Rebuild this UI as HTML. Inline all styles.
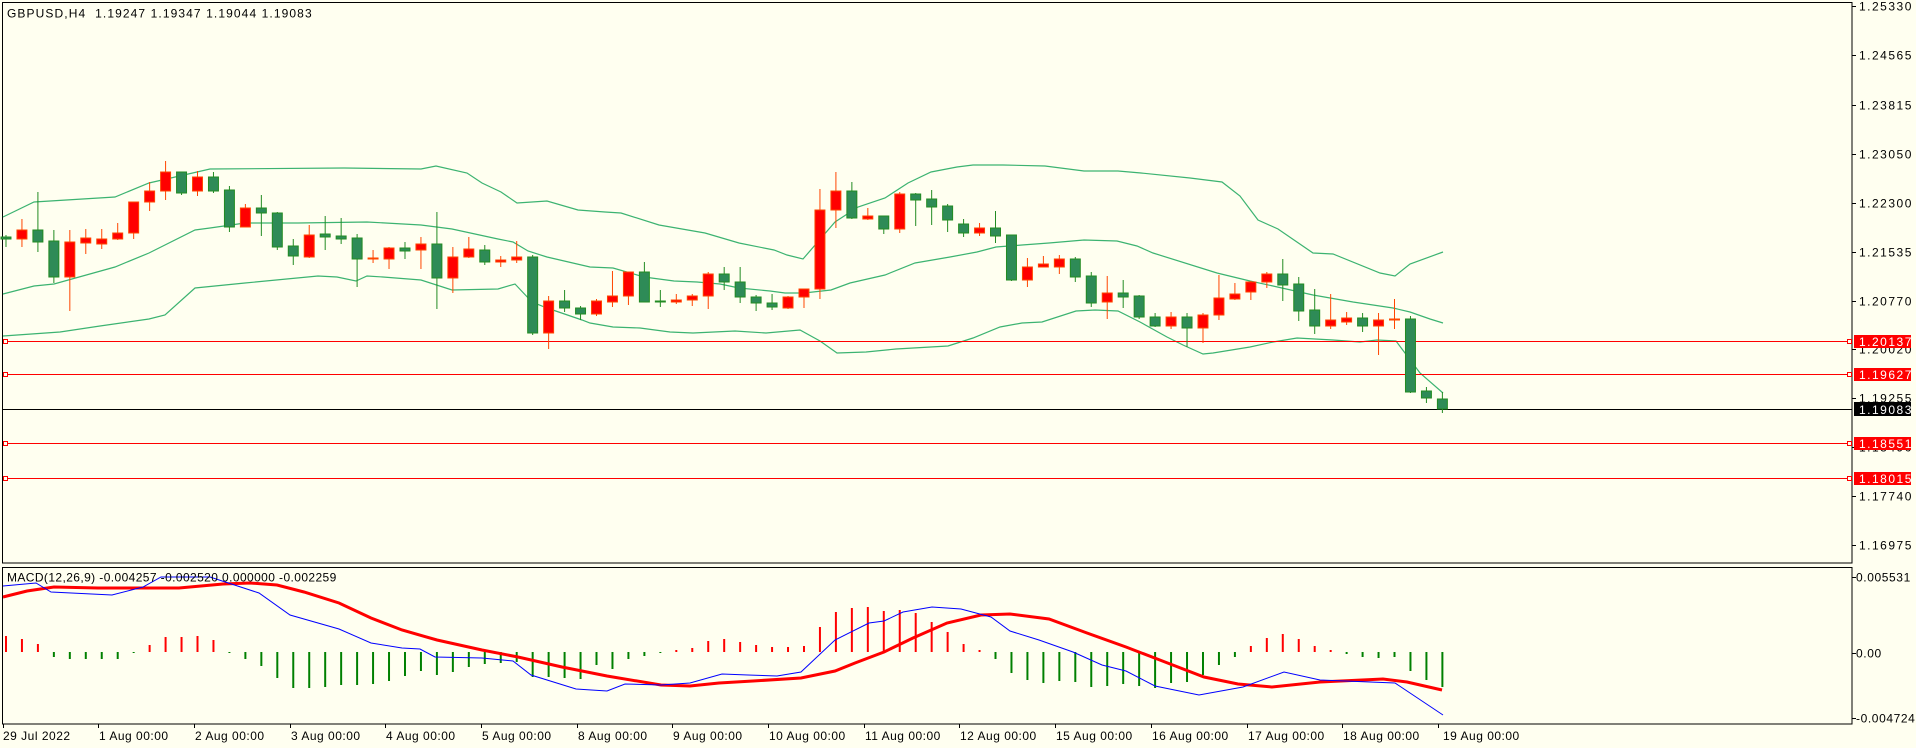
<!DOCTYPE html>
<html><head><meta charset="utf-8"><style>
html,body{margin:0;padding:0;background:#FFFFF0;}
svg{display:block;font-family:"Liberation Sans",sans-serif;}
.rw{stroke:#FF4500;stroke-width:1}
.rb{fill:#FF0000;stroke:#FF4500;stroke-width:1}
.gw{stroke:#228B22;stroke-width:1}
.gb{fill:#2E8B57;stroke:#228B22;stroke-width:1}
.hr{stroke:#FF0000;stroke-width:2}
.hg{stroke:#008000;stroke-width:2}
.ax{font-size:12px;letter-spacing:1.5px;fill:#000}
.tl{font-size:12px;letter-spacing:0.5px;fill:#000}
</style></head><body>
<svg width="1916" height="748" viewBox="0 0 1916 748" xmlns="http://www.w3.org/2000/svg">
<rect width="1916" height="748" fill="#FFFFF0"/>
<rect x="2.5" y="2.5" width="1849.5" height="560.5" fill="none" stroke="#000" stroke-width="1"/>
<rect x="2.5" y="567.5" width="1849.5" height="156.5" fill="none" stroke="#000" stroke-width="1"/>

<g fill="none" stroke="#3CB371" stroke-width="1.2">
<polyline points="3,217 34,202 115,197 149,183 210,169 344,168 421,169 436,166 467,173 482,183 501,192 517,203 547,201 578,210 605,212 621,213 659,225 705,233 739,243 774,250 787,255 803,259 835,222 858,207 885,198 908,183 931,172 957,167 973,165 1003,165 1045,166 1084,171 1118,171 1141,173 1190,178 1222,182 1240,196 1258,220 1278,229 1313,253 1333,254 1380,273 1395,276 1410,264 1443,252"/>
<polyline points="3,294 34,286 54,284 115,267 149,253 195,230 210,228 245,223 298,223 367,222 421,225 452,229 498,239 513,242 528,251 547,257 590,267 613,268 644,277 674,281 697,282 720,284 739,288 770,291 785,293 804,293 831,290 850,283 885,275 915,263 950,257 977,252 996,247 1022,245 1049,243 1084,240 1117,241 1137,246 1153,253 1217,273 1250,281 1273,286 1313,295 1353,302 1393,308 1410,312 1430,319 1443,323"/>
<polyline points="3,336 60,332 100,326 149,319 165,315 195,288 245,283 318,276 337,277 356,281 367,276 383,277 421,280 452,290 498,289 515,284 532,302 547,308 582,320 590,323 613,327 640,328 670,332 693,333 735,331 766,333 800,330 820,341 837,353 866,352 896,349 948,346 973,338 1000,327 1022,323 1042,322 1076,311 1095,310 1118,311 1140,322 1167,337 1183,345 1203,354 1213,353 1250,347 1273,342 1297,338 1333,340 1360,342 1377,340 1396,341 1420,373 1443,393"/>
</g>

<line x1="3" y1="341.5" x2="1852" y2="341.5" stroke="#FF0000" stroke-width="1"/>
<line x1="3" y1="374.5" x2="1852" y2="374.5" stroke="#FF0000" stroke-width="1"/>
<line x1="3" y1="409.5" x2="1852" y2="409.5" stroke="#000" stroke-width="1"/>
<line x1="3" y1="443.5" x2="1852" y2="443.5" stroke="#FF0000" stroke-width="1"/>
<line x1="3" y1="478.5" x2="1852" y2="478.5" stroke="#FF0000" stroke-width="1"/>
<g fill="#FFFFF0" stroke="#FF0000" stroke-width="1">
<rect x="3.5" y="339.5" width="4" height="4"/><rect x="1847.5" y="339.5" width="4" height="4"/>
<rect x="3.5" y="372.5" width="4" height="4"/><rect x="1847.5" y="372.5" width="4" height="4"/>
<rect x="3.5" y="441.5" width="4" height="4"/><rect x="1847.5" y="441.5" width="4" height="4"/>
<rect x="3.5" y="476.5" width="4" height="4"/><rect x="1847.5" y="476.5" width="4" height="4"/>
</g>

<g transform="scale(0.9975 1)">
<line class="gw" x1="6" y1="235" x2="6" y2="247"/><rect class="gb" x="1" y="237" width="10" height="2"/>
<line class="rw" x1="22" y1="219" x2="22" y2="247"/><rect class="rb" x="17" y="230" width="10" height="9"/>
<line class="gw" x1="38" y1="192" x2="38" y2="252"/><rect class="gb" x="33" y="230" width="10" height="12"/>
<line class="gw" x1="54" y1="230" x2="54" y2="283"/><rect class="gb" x="49" y="241" width="10" height="36"/>
<line class="rw" x1="70" y1="230" x2="70" y2="311"/><rect class="rb" x="65" y="242" width="10" height="35"/>
<line class="rw" x1="86" y1="229" x2="86" y2="254"/><rect class="rb" x="81" y="238" width="10" height="5"/>
<line class="rw" x1="102" y1="229" x2="102" y2="249"/><rect class="rb" x="97" y="239" width="10" height="5"/>
<line class="rw" x1="118" y1="223" x2="118" y2="240"/><rect class="rb" x="113" y="233" width="10" height="6"/>
<line class="rw" x1="134" y1="202" x2="134" y2="239"/><rect class="rb" x="129" y="202" width="10" height="31"/>
<line class="rw" x1="150" y1="182" x2="150" y2="211"/><rect class="rb" x="145" y="191" width="10" height="11"/>
<line class="rw" x1="166" y1="161" x2="166" y2="200"/><rect class="rb" x="161" y="172" width="10" height="19"/>
<line class="gw" x1="182" y1="172" x2="182" y2="195"/><rect class="gb" x="177" y="172" width="10" height="21"/>
<line class="rw" x1="198" y1="171" x2="198" y2="196"/><rect class="rb" x="193" y="177" width="10" height="14"/>
<line class="gw" x1="214" y1="172" x2="214" y2="193"/><rect class="gb" x="209" y="177" width="10" height="14"/>
<line class="gw" x1="230" y1="186" x2="230" y2="232"/><rect class="gb" x="225" y="190" width="10" height="37"/>
<line class="rw" x1="246" y1="204" x2="246" y2="227"/><rect class="rb" x="241" y="208" width="10" height="19"/>
<line class="gw" x1="262" y1="195" x2="262" y2="236"/><rect class="gb" x="257" y="208" width="10" height="5"/>
<line class="gw" x1="278" y1="212" x2="278" y2="250"/><rect class="gb" x="273" y="213" width="10" height="34"/>
<line class="gw" x1="294" y1="239" x2="294" y2="265"/><rect class="gb" x="289" y="246" width="10" height="10"/>
<line class="rw" x1="310" y1="225" x2="310" y2="258"/><rect class="rb" x="305" y="235" width="10" height="22"/>
<line class="gw" x1="326" y1="216" x2="326" y2="250"/><rect class="gb" x="321" y="234" width="10" height="3"/>
<line class="gw" x1="342" y1="218" x2="342" y2="244"/><rect class="gb" x="337" y="236" width="10" height="3"/>
<line class="gw" x1="358" y1="234" x2="358" y2="287"/><rect class="gb" x="353" y="238" width="10" height="21"/>
<line class="rw" x1="374" y1="250" x2="374" y2="263"/><rect class="rb" x="369" y="258" width="10" height="1"/>
<line class="rw" x1="390" y1="247" x2="390" y2="269"/><rect class="rb" x="385" y="248" width="10" height="11"/>
<line class="gw" x1="406" y1="242" x2="406" y2="259"/><rect class="gb" x="401" y="248" width="10" height="3"/>
<line class="rw" x1="422" y1="237" x2="422" y2="269"/><rect class="rb" x="417" y="244" width="10" height="6"/>
<line class="gw" x1="438" y1="212" x2="438" y2="309"/><rect class="gb" x="433" y="244" width="10" height="34"/>
<line class="rw" x1="454" y1="247" x2="454" y2="293"/><rect class="rb" x="449" y="257" width="10" height="21"/>
<line class="rw" x1="470" y1="237" x2="470" y2="258"/><rect class="rb" x="465" y="249" width="10" height="8"/>
<line class="gw" x1="486" y1="245" x2="486" y2="265"/><rect class="gb" x="481" y="250" width="10" height="12"/>
<line class="rw" x1="502" y1="256" x2="502" y2="267"/><rect class="rb" x="497" y="260" width="10" height="2"/>
<line class="rw" x1="518" y1="241" x2="518" y2="263"/><rect class="rb" x="513" y="257" width="10" height="3"/>
<line class="gw" x1="534" y1="255" x2="534" y2="335"/><rect class="gb" x="529" y="257" width="10" height="76"/>
<line class="rw" x1="550" y1="296" x2="550" y2="349"/><rect class="rb" x="545" y="301" width="10" height="32"/>
<line class="gw" x1="566" y1="290" x2="566" y2="312"/><rect class="gb" x="561" y="301" width="10" height="7"/>
<line class="gw" x1="582" y1="306" x2="582" y2="320"/><rect class="gb" x="577" y="308" width="10" height="6"/>
<line class="rw" x1="598" y1="299" x2="598" y2="316"/><rect class="rb" x="593" y="301" width="10" height="13"/>
<line class="rw" x1="614" y1="271" x2="614" y2="307"/><rect class="rb" x="609" y="296" width="10" height="6"/>
<line class="rw" x1="630" y1="272" x2="630" y2="305"/><rect class="rb" x="625" y="272" width="10" height="24"/>
<line class="gw" x1="646" y1="262" x2="646" y2="302"/><rect class="gb" x="641" y="272" width="10" height="30"/>
<line class="gw" x1="662" y1="290" x2="662" y2="307"/><rect class="gb" x="657" y="301" width="10" height="1"/>
<line class="rw" x1="678" y1="294" x2="678" y2="304"/><rect class="rb" x="673" y="300" width="10" height="2"/>
<line class="rw" x1="694" y1="294" x2="694" y2="306"/><rect class="rb" x="689" y="296" width="10" height="4"/>
<line class="rw" x1="710" y1="272" x2="710" y2="309"/><rect class="rb" x="705" y="274" width="10" height="22"/>
<line class="gw" x1="726" y1="267" x2="726" y2="290"/><rect class="gb" x="721" y="274" width="10" height="8"/>
<line class="gw" x1="742" y1="267" x2="742" y2="303"/><rect class="gb" x="737" y="282" width="10" height="15"/>
<line class="gw" x1="758" y1="295" x2="758" y2="311"/><rect class="gb" x="753" y="297" width="10" height="6"/>
<line class="gw" x1="774" y1="294" x2="774" y2="310"/><rect class="gb" x="769" y="303" width="10" height="4"/>
<line class="rw" x1="790" y1="296" x2="790" y2="309"/><rect class="rb" x="785" y="297" width="10" height="11"/>
<line class="rw" x1="806" y1="289" x2="806" y2="308"/><rect class="rb" x="801" y="289" width="10" height="8"/>
<line class="rw" x1="822" y1="189" x2="822" y2="299"/><rect class="rb" x="817" y="210" width="10" height="79"/>
<line class="rw" x1="838" y1="172" x2="838" y2="228"/><rect class="rb" x="833" y="191" width="10" height="19"/>
<line class="gw" x1="854" y1="182" x2="854" y2="219"/><rect class="gb" x="849" y="191" width="10" height="27"/>
<line class="rw" x1="870" y1="208" x2="870" y2="220"/><rect class="rb" x="865" y="216" width="10" height="3"/>
<line class="gw" x1="886" y1="216" x2="886" y2="234"/><rect class="gb" x="881" y="216" width="10" height="13"/>
<line class="rw" x1="902" y1="192" x2="902" y2="233"/><rect class="rb" x="897" y="194" width="10" height="35"/>
<line class="gw" x1="918" y1="193" x2="918" y2="226"/><rect class="gb" x="913" y="194" width="10" height="6"/>
<line class="gw" x1="934" y1="190" x2="934" y2="225"/><rect class="gb" x="929" y="199" width="10" height="8"/>
<line class="gw" x1="950" y1="204" x2="950" y2="232"/><rect class="gb" x="945" y="206" width="10" height="14"/>
<line class="gw" x1="966" y1="219" x2="966" y2="237"/><rect class="gb" x="961" y="224" width="10" height="9"/>
<line class="rw" x1="982" y1="223" x2="982" y2="236"/><rect class="rb" x="977" y="228" width="10" height="5"/>
<line class="gw" x1="998" y1="211" x2="998" y2="243"/><rect class="gb" x="993" y="228" width="10" height="8"/>
<line class="gw" x1="1014" y1="235" x2="1014" y2="281"/><rect class="gb" x="1009" y="235" width="10" height="45"/>
<line class="rw" x1="1030" y1="258" x2="1030" y2="287"/><rect class="rb" x="1025" y="267" width="10" height="13"/>
<line class="rw" x1="1046" y1="256" x2="1046" y2="267"/><rect class="rb" x="1041" y="264" width="10" height="3"/>
<line class="rw" x1="1062" y1="255" x2="1062" y2="274"/><rect class="rb" x="1057" y="259" width="10" height="8"/>
<line class="gw" x1="1078" y1="257" x2="1078" y2="282"/><rect class="gb" x="1073" y="259" width="10" height="18"/>
<line class="gw" x1="1094" y1="272" x2="1094" y2="307"/><rect class="gb" x="1089" y="276" width="10" height="27"/>
<line class="rw" x1="1110" y1="276" x2="1110" y2="319"/><rect class="rb" x="1105" y="293" width="10" height="9"/>
<line class="gw" x1="1126" y1="280" x2="1126" y2="308"/><rect class="gb" x="1121" y="293" width="10" height="4"/>
<line class="gw" x1="1142" y1="295" x2="1142" y2="319"/><rect class="gb" x="1137" y="296" width="10" height="21"/>
<line class="gw" x1="1158" y1="313" x2="1158" y2="327"/><rect class="gb" x="1153" y="317" width="10" height="9"/>
<line class="rw" x1="1174" y1="312" x2="1174" y2="329"/><rect class="rb" x="1169" y="317" width="10" height="9"/>
<line class="gw" x1="1190" y1="313" x2="1190" y2="347"/><rect class="gb" x="1185" y="317" width="10" height="11"/>
<line class="rw" x1="1206" y1="313" x2="1206" y2="343"/><rect class="rb" x="1201" y="315" width="10" height="13"/>
<line class="rw" x1="1222" y1="275" x2="1222" y2="320"/><rect class="rb" x="1217" y="298" width="10" height="17"/>
<line class="rw" x1="1238" y1="283" x2="1238" y2="300"/><rect class="rb" x="1233" y="294" width="10" height="5"/>
<line class="rw" x1="1254" y1="281" x2="1254" y2="300"/><rect class="rb" x="1249" y="282" width="10" height="10"/>
<line class="rw" x1="1270" y1="272" x2="1270" y2="288"/><rect class="rb" x="1265" y="274" width="10" height="8"/>
<line class="gw" x1="1286" y1="259" x2="1286" y2="301"/><rect class="gb" x="1281" y="274" width="10" height="11"/>
<line class="gw" x1="1302" y1="277" x2="1302" y2="321"/><rect class="gb" x="1297" y="284" width="10" height="27"/>
<line class="gw" x1="1318" y1="289" x2="1318" y2="334"/><rect class="gb" x="1313" y="310" width="10" height="16"/>
<line class="rw" x1="1334" y1="294" x2="1334" y2="329"/><rect class="rb" x="1329" y="320" width="10" height="6"/>
<line class="rw" x1="1350" y1="312" x2="1350" y2="325"/><rect class="rb" x="1345" y="318" width="10" height="4"/>
<line class="gw" x1="1366" y1="313" x2="1366" y2="332"/><rect class="gb" x="1361" y="318" width="10" height="8"/>
<line class="rw" x1="1382" y1="313" x2="1382" y2="355"/><rect class="rb" x="1377" y="320" width="10" height="6"/>
<line class="rw" x1="1398" y1="299" x2="1398" y2="329"/><rect class="rb" x="1393" y="319" width="10" height="1"/>
<line class="gw" x1="1414" y1="316" x2="1414" y2="393"/><rect class="gb" x="1409" y="319" width="10" height="73"/>
<line class="gw" x1="1430" y1="387" x2="1430" y2="403"/><rect class="gb" x="1425" y="391" width="10" height="7"/>
<line class="gw" x1="1446" y1="392" x2="1446" y2="413"/><rect class="gb" x="1441" y="399" width="10" height="10"/>
</g>

<g transform="scale(0.9975 1)">
<g class="hr">
<line x1="6" y1="652" x2="6" y2="636"/><line x1="22" y1="652" x2="22" y2="639"/><line x1="38" y1="652" x2="38" y2="644"/>
<line x1="150" y1="652" x2="150" y2="645"/><line x1="166" y1="652" x2="166" y2="637"/><line x1="182" y1="652" x2="182" y2="637"/><line x1="198" y1="652" x2="198" y2="636"/><line x1="214" y1="652" x2="214" y2="640"/>
<line x1="678" y1="652" x2="678" y2="650"/><line x1="694" y1="652" x2="694" y2="648"/><line x1="710" y1="652" x2="710" y2="641"/><line x1="726" y1="652" x2="726" y2="639"/><line x1="742" y1="652" x2="742" y2="642"/><line x1="758" y1="652" x2="758" y2="645"/><line x1="774" y1="652" x2="774" y2="647"/><line x1="790" y1="652" x2="790" y2="647"/><line x1="806" y1="652" x2="806" y2="646"/><line x1="822" y1="652" x2="822" y2="627"/><line x1="838" y1="652" x2="838" y2="612"/><line x1="854" y1="652" x2="854" y2="608"/><line x1="870" y1="652" x2="870" y2="607"/><line x1="886" y1="652" x2="886" y2="611"/><line x1="902" y1="652" x2="902" y2="610"/><line x1="918" y1="652" x2="918" y2="613"/><line x1="934" y1="652" x2="934" y2="622"/><line x1="950" y1="652" x2="950" y2="632"/><line x1="966" y1="652" x2="966" y2="644"/><line x1="982" y1="652" x2="982" y2="650"/>
<line x1="1254" y1="652" x2="1254" y2="646"/><line x1="1270" y1="652" x2="1270" y2="638"/><line x1="1286" y1="652" x2="1286" y2="634"/><line x1="1302" y1="652" x2="1302" y2="639"/><line x1="1318" y1="652" x2="1318" y2="646"/><line x1="1334" y1="652" x2="1334" y2="650"/>
</g>
<g class="hg">
<line x1="54" y1="652" x2="54" y2="657"/><line x1="70" y1="652" x2="70" y2="659"/><line x1="86" y1="652" x2="86" y2="659"/><line x1="102" y1="652" x2="102" y2="659"/><line x1="118" y1="652" x2="118" y2="659"/><line x1="134" y1="652" x2="134" y2="653"/>
<line x1="230" y1="652" x2="230" y2="653"/><line x1="246" y1="652" x2="246" y2="659"/><line x1="262" y1="652" x2="262" y2="666"/><line x1="278" y1="652" x2="278" y2="678"/><line x1="294" y1="652" x2="294" y2="688"/><line x1="310" y1="652" x2="310" y2="688"/><line x1="326" y1="652" x2="326" y2="687"/><line x1="342" y1="652" x2="342" y2="685"/><line x1="358" y1="652" x2="358" y2="685"/><line x1="374" y1="652" x2="374" y2="684"/><line x1="390" y1="652" x2="390" y2="681"/><line x1="406" y1="652" x2="406" y2="676"/><line x1="422" y1="652" x2="422" y2="671"/><line x1="438" y1="652" x2="438" y2="675"/><line x1="454" y1="652" x2="454" y2="672"/><line x1="470" y1="652" x2="470" y2="667"/><line x1="486" y1="652" x2="486" y2="664"/><line x1="502" y1="652" x2="502" y2="663"/><line x1="518" y1="652" x2="518" y2="662"/><line x1="534" y1="652" x2="534" y2="677"/><line x1="550" y1="652" x2="550" y2="677"/><line x1="566" y1="652" x2="566" y2="678"/><line x1="582" y1="652" x2="582" y2="679"/><line x1="598" y1="652" x2="598" y2="665"/><line x1="614" y1="652" x2="614" y2="669"/><line x1="630" y1="652" x2="630" y2="659"/><line x1="646" y1="652" x2="646" y2="656"/><line x1="662" y1="652" x2="662" y2="653"/>
<line x1="998" y1="652" x2="998" y2="659"/><line x1="1014" y1="652" x2="1014" y2="673"/><line x1="1030" y1="652" x2="1030" y2="680"/><line x1="1046" y1="652" x2="1046" y2="683"/><line x1="1062" y1="652" x2="1062" y2="681"/><line x1="1078" y1="652" x2="1078" y2="682"/><line x1="1094" y1="652" x2="1094" y2="687"/><line x1="1110" y1="652" x2="1110" y2="686"/><line x1="1126" y1="652" x2="1126" y2="684"/><line x1="1142" y1="652" x2="1142" y2="686"/><line x1="1158" y1="652" x2="1158" y2="688"/><line x1="1174" y1="652" x2="1174" y2="683"/><line x1="1190" y1="652" x2="1190" y2="682"/><line x1="1206" y1="652" x2="1206" y2="675"/><line x1="1222" y1="652" x2="1222" y2="665"/><line x1="1238" y1="652" x2="1238" y2="657"/>
<line x1="1350" y1="652" x2="1350" y2="654"/><line x1="1366" y1="652" x2="1366" y2="657"/><line x1="1382" y1="652" x2="1382" y2="658"/><line x1="1398" y1="652" x2="1398" y2="657"/><line x1="1414" y1="652" x2="1414" y2="671"/><line x1="1430" y1="652" x2="1430" y2="680"/><line x1="1446" y1="652" x2="1446" y2="687"/>
</g>
</g>

<polyline fill="none" stroke="#FF0000" stroke-width="3" points="3,597 27,591 54,587 98,588 179,588 223,584 250,583 277,585 304,592 339,603 371,618 402,630 437,640 482,650 518,657 562,667 607,676 661,685 690,686 719,683 753,681 801,678 835,671 855,663 884,652 913,638 947,623 981,615 1010,614 1049,619 1087,633 1126,647 1165,662 1204,677 1238,684 1272,687 1320,682 1383,679 1407,682 1442,690"/>
<polyline fill="none" stroke="#0000FF" stroke-width="1" points="3,586 36,583 51,592 112,595 143,587 161,577 210,577 259,593 290,615 339,629 371,643 402,648 420,649 435,657 482,658 513,661 531,675 576,689 607,691 625,684 661,685 690,683 722,674 748,675 777,676 801,672 835,640 869,623 884,621 903,612 932,607 961,609 991,617 1010,631 1039,640 1073,652 1102,665 1126,671 1155,686 1199,695 1243,687 1284,672 1320,680 1395,683 1443,715"/>

<text x="7" y="17.5" font-size="12" letter-spacing="1.1" fill="#000">GBPUSD,H4&#160;&#160;1.19247 1.19347 1.19044 1.19083</text>
<text x="7" y="581.5" font-size="12" letter-spacing="0.4" fill="#000">MACD(12,26,9) -0.004257 -0.002520 0.000000 -0.002259</text>

<g stroke="#000" stroke-width="1">
<line x1="1852" y1="6.5" x2="1856" y2="6.5"/><line x1="1852" y1="55.5" x2="1856" y2="55.5"/><line x1="1852" y1="105.5" x2="1856" y2="105.5"/><line x1="1852" y1="154.5" x2="1856" y2="154.5"/><line x1="1852" y1="203.5" x2="1856" y2="203.5"/><line x1="1852" y1="252.5" x2="1856" y2="252.5"/><line x1="1852" y1="301.5" x2="1856" y2="301.5"/><line x1="1852" y1="349.5" x2="1856" y2="349.5"/><line x1="1852" y1="398.5" x2="1856" y2="398.5"/><line x1="1852" y1="447.5" x2="1856" y2="447.5"/><line x1="1852" y1="496.5" x2="1856" y2="496.5"/><line x1="1852" y1="545.5" x2="1856" y2="545.5"/>
<line x1="1852" y1="577.5" x2="1856" y2="577.5"/><line x1="1852" y1="653.5" x2="1856" y2="653.5"/><line x1="1852" y1="718.5" x2="1856" y2="718.5"/>
</g>
<g class="ax">
<text x="1859" y="10.5">1.25330</text>
<text x="1859" y="59.5">1.24565</text>
<text x="1859" y="109.5">1.23815</text>
<text x="1859" y="158.5">1.23050</text>
<text x="1859" y="207.5">1.22300</text>
<text x="1859" y="256.5">1.21535</text>
<text x="1859" y="305.5">1.20770</text>
<text x="1859" y="353.5">1.20020</text>
<text x="1859" y="402.5">1.19255</text>
<text x="1859" y="451.5">1.18490</text>
<text x="1859" y="500.5">1.17740</text>
<text x="1859" y="549.5">1.16975</text>
</g>
<g font-size="12" letter-spacing="0.6" fill="#000">
<text x="1856" y="581.5">0.005531</text>
<text x="1856" y="657.5">0.00</text>
<text x="1856" y="722.5">-0.004724</text>
</g>
<rect x="1854" y="335" width="57" height="13" fill="#FF0000"/>
<rect x="1854" y="368" width="57" height="13" fill="#FF0000"/>
<rect x="1854" y="402" width="57" height="14" fill="#000"/>
<rect x="1854" y="437" width="57" height="13" fill="#FF0000"/>
<rect x="1854" y="472" width="57" height="13" fill="#FF0000"/>
<g class="ax" style="fill:#fff">
<text x="1859" y="346">1.20137</text>
<text x="1859" y="379">1.19627</text>
<text x="1859" y="414">1.19083</text>
<text x="1859" y="448">1.18551</text>
<text x="1859" y="483">1.18015</text>
</g>

<g stroke="#000" stroke-width="1">
<line x1="3.5" y1="724" x2="3.5" y2="728"/><line x1="98.5" y1="724" x2="98.5" y2="728"/><line x1="194.5" y1="724" x2="194.5" y2="728"/><line x1="290.5" y1="724" x2="290.5" y2="728"/><line x1="385.5" y1="724" x2="385.5" y2="728"/><line x1="481.5" y1="724" x2="481.5" y2="728"/><line x1="577.5" y1="724" x2="577.5" y2="728"/><line x1="672.5" y1="724" x2="672.5" y2="728"/><line x1="768.5" y1="724" x2="768.5" y2="728"/><line x1="864.5" y1="724" x2="864.5" y2="728"/><line x1="959.5" y1="724" x2="959.5" y2="728"/><line x1="1055.5" y1="724" x2="1055.5" y2="728"/><line x1="1151.5" y1="724" x2="1151.5" y2="728"/><line x1="1247.5" y1="724" x2="1247.5" y2="728"/><line x1="1342.5" y1="724" x2="1342.5" y2="728"/><line x1="1438.5" y1="724" x2="1438.5" y2="728"/>
</g>
<g class="tl">
<text x="3" y="740">29 Jul 2022</text>
<text x="99" y="740">1 Aug 00:00</text>
<text x="195" y="740">2 Aug 00:00</text>
<text x="291" y="740">3 Aug 00:00</text>
<text x="386" y="740">4 Aug 00:00</text>
<text x="482" y="740">5 Aug 00:00</text>
<text x="578" y="740">8 Aug 00:00</text>
<text x="673" y="740">9 Aug 00:00</text>
<text x="769" y="740">10 Aug 00:00</text>
<text x="865" y="740">11 Aug 00:00</text>
<text x="960" y="740">12 Aug 00:00</text>
<text x="1056" y="740">15 Aug 00:00</text>
<text x="1152" y="740">16 Aug 00:00</text>
<text x="1248" y="740">17 Aug 00:00</text>
<text x="1343" y="740">18 Aug 00:00</text>
<text x="1443" y="740">19 Aug 00:00</text>
</g>
</svg>
</body></html>
